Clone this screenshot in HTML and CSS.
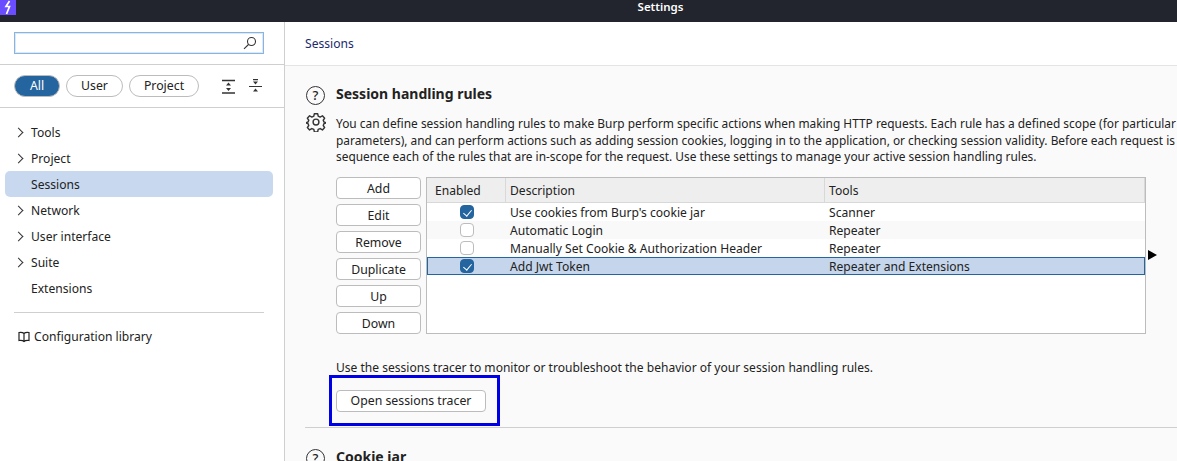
FILE: index.html

```html
<!DOCTYPE html>
<html lang="en">
  <head>
    <meta charset="UTF-8" />
    <meta name="viewport" content="width=device-width, initial-scale=1.0" />
    <title>Settings</title>
    <link rel="stylesheet" href="styles.css">
  </head>
  <body>
    <div class="titlebar">
      <span class="logo">
        <svg width="16" height="15" viewBox="0 0 16 15"><path d="M9.5 1 6 6.500h3.500L6.500 14" fill="none" stroke="#fff" stroke-width="1.700"/></svg>
      </span>
      <span class="title">Settings</span>
    </div>
    <div class="app">
      <aside class="sidebar">
        <div class="search-row">
          <div class="search">
            <svg width="14" height="14" viewBox="0 0 14 14" fill="none" stroke="#333" stroke-width="1.100"><circle cx="8.500" cy="5.500" r="4"/><path d="M5.500 8.500 1 12.800"/></svg>
          </div>
        </div>
        <div class="filter-row">
          <button class="pill pill-on">All</button>
          <button class="pill">User</button>
          <button class="pill">Project</button>
          <span class="filter-icons">
            <svg width="13" height="16" viewBox="0 0 13 16"><path d="M0 1.500h13M0 14h13" stroke="#333" stroke-width="1.300"/><path d="M6.500 3.500 9 6.500H4zM6.500 12 4 9h5z" fill="#333"/></svg>
            <svg width="13" height="16" viewBox="0 0 13 16"><path d="M0 7.500h13M4 .6h5" stroke="#333" stroke-width="1.200"/><path d="M6.500 5.500 4 2.500h5zM6.500 9.500 9 12.500H4z" fill="#333"/></svg>
          </span>
        </div>
        <nav class="nav">
          <a class="nav-item has-arrow">Tools</a>
          <a class="nav-item has-arrow">Project</a>
          <a class="nav-item nav-item-on">Sessions</a>
          <a class="nav-item has-arrow">Network</a>
          <a class="nav-item has-arrow">User interface</a>
          <a class="nav-item has-arrow">Suite</a>
          <a class="nav-item">Extensions</a>
        </nav>
        <div class="library">
          <svg width="12" height="12" viewBox="0 0 12 12" fill="none" stroke="#222" stroke-width="1.200"><path d="M6 2.500C5 1.500 3 1.200 1 1.500v8c2-.3 4 0 5 1 1-1 3-1.300 5-1v-8c-2-.3-4 0-5 1zM6 2.500v8"/></svg>
          <span>Configuration library</span>
        </div>
      </aside>
      <main class="content">
        <div class="crumb">Sessions</div>
        <div class="panel">
          <section class="section">
            <div class="section-icons">
              <span class="help">?</span>
              <svg class="gear" width="20" height="20" viewBox="0 0 24 24" fill="none" stroke="#333" stroke-width="1.700" stroke-linejoin="round"><path d="M10 2h4l.6 3 2.400 1.100 2.700-1.600 2.700 2.900-1.700 2.500.8 2.100 3 .9v0l-3 1.100-.8 2.200 1.700 2.500-2.700 2.800-2.700-1.600-2.400 1-.6 3h-4l-.6-3-2.400-1-2.700 1.600-2.700-2.800 1.700-2.500-.8-2.200-3-1.100 3-.9.8-2.100-1.700-2.500 2.700-2.900 2.700 1.600 2.400-1.100z"/><circle cx="12" cy="12" r="3.500"/></svg>
            </div>
            <div class="section-body">
              <h2>Session handling rules</h2>
              <p class="desc">You can define session handling rules to make Burp perform specific actions when making HTTP requests. Each rule has a defined scope (for particular tools, URLs and<br>parameters), and can perform actions such as adding session cookies, logging in to the application, or checking session validity. Before each request is issued, Burp applies in<br>sequence each of the rules that are in-scope for the request. Use these settings to manage your active session handling rules.</p>
              <div class="rules">
                <div class="rule-buttons">
                  <button class="btn">Add</button>
                  <button class="btn">Edit</button>
                  <button class="btn">Remove</button>
                  <button class="btn">Duplicate</button>
                  <button class="btn">Up</button>
                  <button class="btn">Down</button>
                </div>
                <div class="table-wrap">
                  <table class="rules-table">
                    <colgroup>
                      <col class="col-enabled">
                      <col class="col-desc">
                      <col>
                    </colgroup>
                    <thead>
                      <tr><th>Enabled</th><th>Description</th><th>Tools</th></tr>
                    </thead>
                    <tbody>
                      <tr><td><span class="check check-on"></span></td><td>Use cookies from Burp's cookie jar</td><td>Scanner</td></tr>
                      <tr class="alt"><td><span class="check"></span></td><td>Automatic Login</td><td>Repeater</td></tr>
                      <tr><td><span class="check"></span></td><td>Manually Set Cookie &amp; Authorization Header</td><td>Repeater</td></tr>
                      <tr class="selected"><td><span class="check check-on"></span></td><td>Add Jwt Token</td><td>Repeater and Extensions</td></tr>
                    </tbody>
                  </table>
                </div>
                <span class="split-arrow"></span>
              </div>
              <p class="tracer-text">Use the sessions tracer to monitor or troubleshoot the behavior of your session handling rules.</p>
              <button class="btn btn-tracer">Open sessions tracer</button>
            </div>
          </section>
          <hr class="divider">
          <section class="section">
            <div class="section-icons">
              <span class="help">?</span>
            </div>
            <div class="section-body">
              <h2>Cookie jar</h2>
            </div>
          </section>
          <div class="highlight"></div>
        </div>
      </main>
    </div>
  </body>
</html>
```

FILE: styles.css

```css
* {
  box-sizing: border-box;
}

html,
body {
  height: 461px;
  overflow: hidden;
}

body {
  margin: 0;
  font-family: "Noto Sans", sans-serif;
  font-size: 12.1px;
  color: #222;
  background-color: #fff;
}

/* Title bar */
.titlebar {
  height: 22px;
  padding-left: 144px;
  background-color: #22252e;
  color: #fff;
  text-align: center;
  position: relative;
}

.title {
  font-size: 11.5px;
  font-weight: 600;
  line-height: 14px;
  display: block;
}

.logo {
  position: absolute;
  left: 0;
  top: 0;
  width: 16px;
  height: 15px;
  background-color: #6a4dff;
  display: flex;
}

.app {
  display: flex;
  height: 439px;
}

/* Sidebar */
.sidebar {
  width: 285px;
  flex-shrink: 0;
  border-right: 1px solid #cfcfcf;
}

.search-row {
  height: 43px;
  padding: 10px 20px 0 14px;
  border-bottom: 1px solid #cfcfcf;
}

.search {
  height: 22px;
  border: 1px solid #8ab4e0;
  box-shadow: inset 0 0 0 1px #dbe8f6;
  display: flex;
  justify-content: flex-end;
  align-items: center;
  padding-right: 6px;
}

.filter-row {
  height: 43px;
  padding: 10px 0 0 14px;
  border-bottom: 1px solid #cfcfcf;
  display: flex;
  align-items: flex-start;
  gap: 6px;
}

.pill {
  height: 22px;
  padding: 0 14px;
  border: 1px solid #bcbcbc;
  border-radius: 11px;
  background-color: #fff;
  font-family: inherit;
  font-size: 12.300px;
  color: #222;
  line-height: 18px;
}

.pill-on {
  width: 46px;
  padding: 0;
  background-color: #25659f;
  color: #fff;
}

.filter-icons {
  display: flex;
  gap: 14px;
  margin: 4px 0 0 17px;
}

.nav {
  padding: 11px 11px 0 5px;
}

.nav-item {
  display: block;
  height: 26px;
  line-height: 27px;
  padding-left: 26px;
  border-radius: 5px;
  position: relative;
}

.nav-item-on {
  background-color: #c8d9ef;
}

.has-arrow::before {
  content: "";
  position: absolute;
  left: 10px;
  top: 10px;
  width: 6px;
  height: 6px;
  border-top: 1.200px solid #333;
  border-right: 1.200px solid #333;
  transform: rotate(45deg);
}

.library {
  margin: 11px 20px 0 14px;
  padding: 15px 0 0 4px;
  border-top: 1px solid #cfcfcf;
  display: flex;
  align-items: center;
  gap: 4px;
  line-height: 18px;
}

/* Main content */
.content {
  flex: 1;
  min-width: 0;
}

.crumb {
  height: 44px;
  padding: 13px 0 0 20px;
  color: #1c2a6b;
  line-height: 17px;
  border-bottom: 1px solid #e4e4e4;
}

.panel {
  height: 395px;
  padding: 20px 0 0 20px;
  background-color: #fafafa;
  overflow: hidden;
  position: relative;
}

.section {
  display: flex;
}

.section-icons {
  width: 31px;
  flex-shrink: 0;
}

.help {
  display: block;
  width: 19px;
  height: 19px;
  margin: 0 0 7px 1px;
  border: 1.500px solid #333;
  border-radius: 50%;
  font-size: 13px;
  font-weight: 500;
  line-height: 16px;
  text-align: center;
}

.gear {
  display: block;
  margin-left: 1px;
}

.section-body {
  min-width: 0;
  flex: 1;
}

h2 {
  margin: -1px 0 0;
  font-size: 14px;
  font-weight: 700;
  line-height: 18px;
  color: #222;
}

.desc {
  margin: 12px 0 0;
  font-size: 11.900px;
  line-height: 16.500px;
  white-space: nowrap;
}

.rules {
  display: flex;
  margin-top: 12.500px;
  align-items: flex-start;
}

.rule-buttons {
  width: 90px;
  flex-shrink: 0;
  display: flex;
  flex-direction: column;
  gap: 5px;
}

.btn {
  width: 85px;
  height: 22px;
  padding: 2px 0 0;
  border: 1px solid #bcbcbc;
  border-radius: 4px;
  background-color: #fff;
  font-family: inherit;
  font-size: 12.300px;
  line-height: 18px;
  color: #222;
}

.table-wrap {
  width: 720px;
  height: 157px;
  flex-shrink: 0;
  border: 1px solid #bcbcbc;
  background-color: #fff;
}

.rules-table {
  width: 100%;
  border-collapse: separate;
  border-spacing: 0;
  table-layout: fixed;
}

.col-enabled {
  width: 79px;
}

.col-desc {
  width: 319px;
}

.rules-table th {
  height: 25px;
  padding: 1px 0 0 4px;
  background-color: #eeeeee;
  border-bottom: 1px solid #d8d8d8;
  border-right: 1px solid #d8d8d8;
  font-weight: 400;
  text-align: left;
}

.rules-table th:first-child {
  padding-left: 8px;
}

.rules-table td {
  height: 18px;
  padding: 1px 0 0 4px;
  line-height: 17px;
  white-space: nowrap;
}

.rules-table td:first-child {
  padding: 0;
  text-align: center;
}

.alt td {
  background-color: #f9f9f9;
}

.rules-table .selected td {
  background-color: #c5d6ec;
  border-top: 1px solid #25659f;
  border-bottom: 1px solid #25659f;
  line-height: 15px;
}

.selected td:first-child {
  border-left: 1px solid #25659f;
}

.selected td:last-child {
  border-right: 1px solid #25659f;
}

.check {
  display: block;
  width: 14px;
  height: 14px;
  margin: 0 auto;
  border: 1px solid #bcbcbc;
  border-radius: 4px;
  background-color: #fff;
  position: relative;
}

.check-on {
  background-color: #25659f;
  border-color: #25659f;
}

.check-on::after {
  content: "";
  position: absolute;
  left: 4px;
  top: 2px;
  width: 4px;
  height: 7px;
  border-right: 1.500px solid #fff;
  border-bottom: 1.500px solid #fff;
  transform: rotate(40deg);
}

.split-arrow {
  margin: 73px 0 0 2px;
  width: 0;
  height: 0;
  border-left: 9px solid #000;
  border-top: 5px solid transparent;
  border-bottom: 5px solid transparent;
}

.tracer-text {
  margin: 24.500px 0 0;
  font-size: 12.050px;
  line-height: 17px;
}

.btn-tracer {
  display: block;
  width: 150px;
  margin-top: 14px;
  padding-top: 0;
}

.divider {
  margin: 15px 0 21px;
  border: none;
  border-top: 1px solid #cfcfcf;
}

/* Blue annotation box drawn over the screenshot */
.highlight {
  position: absolute;
  left: 44px;
  top: 309px;
  width: 171px;
  height: 51px;
  border: 3px solid #0000e6;
}
```
